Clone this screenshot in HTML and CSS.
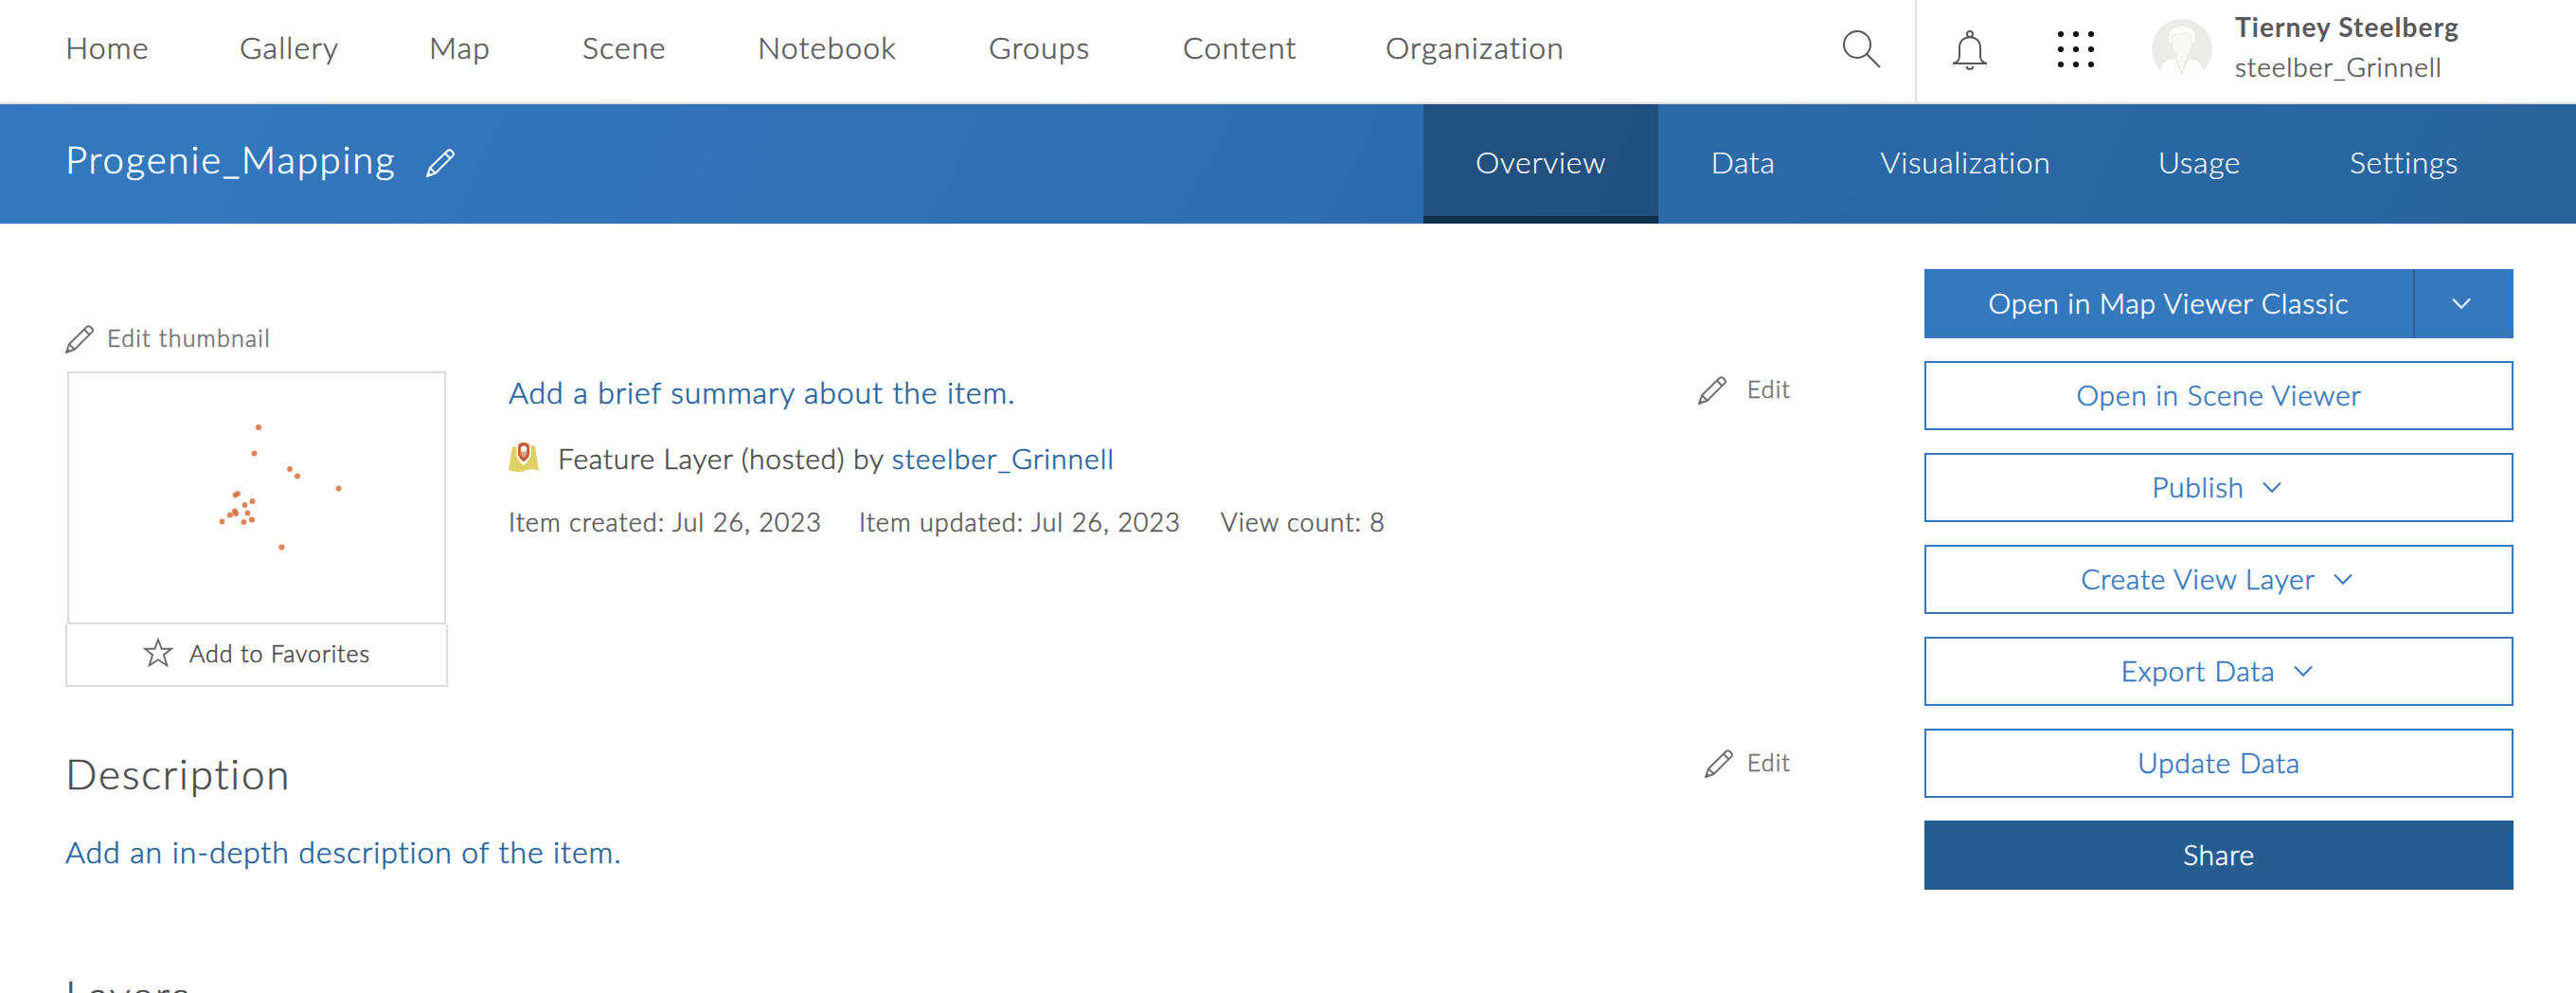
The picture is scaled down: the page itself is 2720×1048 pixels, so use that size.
FILE: index.html
```html
<!DOCTYPE html>
<html lang="en">
<head>
<meta charset="utf-8">
<title>Progenie_Mapping</title>
<link rel="stylesheet" href="styles.css">
</head>
<body>
<svg class="defs" width="0" height="0" aria-hidden="true">
  <symbol id="pencil" viewBox="0 0 30 30">
    <path d="M1 29 L4 20.200 L22.600 2 Q24.600 .4 26.400 2 L28.200 3.800 Q29.800 5.600 28.200 7.400 L9.800 25.800 Z M20 4.800 L25.400 10.200 M4 20.200 L9.800 25.800" fill="none" stroke="currentColor" stroke-width="2" stroke-linejoin="round"/>
    <path d="M0 30 L2 24.400 L5.600 28 Z" fill="currentColor"/>
  </symbol>
  <symbol id="chevron" viewBox="0 0 20 13">
    <path d="M1 1.5 L10 10.7 L19 1.5" fill="none" stroke="currentColor" stroke-width="2"/>
  </symbol>
</svg>

<header class="header">
  <nav class="nav">
    <a>Home</a><a>Gallery</a><a>Map</a><a>Scene</a><a>Notebook</a><a>Groups</a><a>Content</a><a>Organization</a>
  </nav>
  <div class="tools">
    <svg class="search" width="40" height="40" viewBox="0 0 40 40"><circle cx="15" cy="15" r="14" fill="none" stroke="#555" stroke-width="2"/><path d="M25 25 L39 39" stroke="#555" stroke-width="2"/></svg>
    <div class="account">
      <svg class="bell" width="36" height="42" viewBox="0 0 36 42" fill="none" stroke="#595959" stroke-width="2"><circle cx="18" cy="4" r="3"/><path d="M0 35 H36 M1 34.5 Q7 33.5 7 27 V18 C7 11 12 7.2 18 7.2 S29 11 29 18 V27 Q29 33.5 35 34.5 M14.5 38 Q15 41 18 41 T21.5 38"/></svg>
      <svg class="apps" width="40" height="40" viewBox="0 0 40 40" fill="#151515"><circle cx="4" cy="4" r="3.1"/><circle cx="20" cy="4" r="3.1"/><circle cx="36" cy="4" r="3.1"/><circle cx="4" cy="20" r="3.1"/><circle cx="20" cy="20" r="3.1"/><circle cx="36" cy="20" r="3.1"/><circle cx="4" cy="36" r="3.1"/><circle cx="20" cy="36" r="3.1"/><circle cx="36" cy="36" r="3.1"/></svg>
      <svg class="avatar" width="64" height="64" viewBox="0 0 64 64">
        <defs><clipPath id="round"><circle cx="32" cy="32" r="32"/></clipPath></defs>
        <g clip-path="url(#round)"><rect width="64" height="64" fill="#ebebea"/>
        <path d="M8 64 Q9 46 17 43.500 L27 42 V36 H37 V42 L46 43.500 Q54 46 56 64 Z" fill="#fdfdfd"/>
        <path d="M19 25 Q17 13 25 9 Q34 5 42 11 Q47 15 45 25 Z" fill="#fdfdfd"/>
        <path d="M22 17 Q31 16.500 38 14 Q42 17 42.500 24 C43 34 37 41 32 41 S20 34 22 17 Z" fill="#f8f8f7" stroke="#ececeb"/>
        <path d="M26 42 L31.500 58 L38 42" fill="#f8f8f7" stroke="#e0e0df"/></g>
      </svg>
      <div class="user"><strong>Tierney Steelberg</strong><span>steelber_Grinnell</span></div>
    </div>
  </div>
</header>

<div class="titlebar">
  <h1>Progenie_Mapping</h1>
  <svg class="pencil" width="30" height="30"><use href="#pencil"/></svg>
  <nav class="tabs"><a class="active">Overview</a><a>Data</a><a>Visualization</a><a>Usage</a><a>Settings</a></nav>
</div>

<main class="page">
  <div class="content">
    <section class="item">
      <div class="media">
        <div class="edit-thumb"><svg width="30" height="30"><use href="#pencil"/></svg><span>Edit thumbnail</span></div>
        <svg class="thumb" width="396" height="263" viewBox="2 2 396 263" fill="#d8743f">
          <g fill-opacity=".88"><circle cx="202" cy="59" r="3.100"/><circle cx="197.500" cy="86.500" r="2.900"/><circle cx="235" cy="103" r="2.900"/><circle cx="243" cy="110.500" r="3"/><circle cx="286.500" cy="123.500" r="3"/><circle cx="180" cy="129" r="3"/><circle cx="177.500" cy="130.500" r="2.900"/><circle cx="195.500" cy="137" r="3"/><circle cx="187.500" cy="141" r="2.900"/><circle cx="177" cy="147.500" r="3"/><circle cx="178" cy="150" r="3"/><circle cx="172" cy="151.500" r="3"/><circle cx="190.500" cy="149.500" r="2.900"/><circle cx="195" cy="156.500" r="3.100"/><circle cx="163.500" cy="158.500" r="2.900"/><circle cx="186.500" cy="159" r="2.900"/><circle cx="226.500" cy="185.500" r="3.100"/></g>
        </svg>
        <div class="favorite"><svg width="32" height="31" viewBox="0 0 32 31"><path d="M16 2.200 L19.700 11.700 H30 L21.900 18.200 L25.300 29.300 L16 23.300 L6.700 29.300 L10.100 18.200 L2 11.700 H12.300 Z" fill="none" stroke="#6a6a6a" stroke-width="1.900"/></svg><span>Add to Favorites</span></div>
      </div>
      <div class="info">
        <a class="summary">Add a brief summary about the item.</a>
        <div class="type">
          <svg width="32" height="32" viewBox="0 0 32 32"><path d="M4 4 Q9 6 16 4 T28 4 L32 30 Q26 27 20 29 Q10 33 0 29 Z" fill="#e0d065"/><path d="M8.500 0 H23.500 V14 Q22 19 16 24 Q10 19 8.500 14 Z" fill="#fff"/><path d="M16 0 Q22 0 22 5 V13 Q21 16.500 16 20.500 Q11 16.500 10 13 V5 Q10 0 16 0 Z" fill="#c3593a"/><path d="M16 3 Q19.500 3 19.500 6.500 V12.500 L16 16.500 L12.500 12.500 V6.500 Q12.500 3 16 3 Z" fill="#dc9a84"/><circle cx="16" cy="7" r="3" fill="#fff"/></svg>
          <span>Feature Layer (hosted) by <a>steelber_Grinnell</a></span>
        </div>
        <div class="meta"><span>Item created: Jul 26, 2023</span><span>Item updated: Jul 26, 2023</span><span>View count: 8</span></div>
      </div>
      <div class="edit edit-item"><svg width="30" height="30"><use href="#pencil"/></svg><span>Edit</span></div>
    </section>
    <section class="description">
      <div class="section-head"><h2>Description</h2><div class="edit"><svg width="30" height="30"><use href="#pencil"/></svg><span>Edit</span></div></div>
      <a class="summary">Add an in-depth description of the item.</a>
    </section>
    <section class="layers"><h2>Layers</h2></section>
  </div>

  <aside class="actions">
    <div class="split"><a>Open in Map Viewer Classic</a><a class="toggle"><svg width="20" height="13"><use href="#chevron"/></svg></a></div>
    <a class="button">Open in Scene Viewer</a>
    <a class="button drop"><span>Publish</span><svg width="20" height="13"><use href="#chevron"/></svg></a>
    <a class="button drop"><span>Create View Layer</span><svg width="20" height="13"><use href="#chevron"/></svg></a>
    <a class="button drop"><span>Export Data</span><svg width="20" height="13"><use href="#chevron"/></svg></a>
    <a class="button">Update Data</a>
    <a class="button share">Share</a>
  </aside>
</main>
</body>
</html>
```
FILE: styles.css
```css
* { box-sizing: border-box; }
body {
  margin: 0;
  height: 1048px;
  overflow: hidden;
  background: #fff;
  color: #4c4c4c;
  font-family: Lato, "Open Sans", sans-serif;
  font-weight: 300;
  -webkit-text-stroke: .6px;
}
svg { display: block; flex: none; }
.defs { position: absolute; }
h1, h2 { margin: 0; font-weight: 300; }

.header {
  display: flex;
  justify-content: space-between;
  height: 110px;
  border-bottom: 2px solid #dfdfdf;
}
.nav {
  display: grid;
  grid-template-columns: 184px 200px 162px 185px 244px 205px 214px auto;
  padding: 30px 0 0 69px;
  color: #595959;
  font-size: 32px;
  line-height: 40px;
  letter-spacing: 1.15px;
}
.tools { display: flex; }
.search { margin: 32px 36px 0 0; }
.account {
  display: flex;
  width: 698px;
  border-left: 2px solid #dfdfdf;
  padding-left: 38px;
}
.bell { margin-top: 32px; }
.apps { margin: 32px 0 0 74px; }
.avatar { margin: 20px 0 0 60px; }
.user {
  display: flex;
  flex-direction: column;
  margin: 8px 0 0 24px;
  color: #595959;
  font-size: 28px;
  line-height: 42px;
  letter-spacing: .9px;
}
.user strong {
  font-weight: 700;
  line-height: 41px;
  letter-spacing: 1.1px;
  -webkit-text-stroke: 0;
}

.titlebar {
  display: flex;
  height: 126px;
  padding-left: 69px;
  background: linear-gradient(115deg, #3479bf, #2d6bab 60%, #28639b);
  color: #fff;
}
.titlebar h1 {
  width: 381px;
  padding-top: 33px;
  font-size: 40px;
  line-height: 50px;
  letter-spacing: 1.9px;
}
.titlebar .pencil { margin-top: 47px; }
.tabs {
  display: grid;
  grid-template-columns: 248px 179px 291px 203px 229px;
  margin: 0 67px 0 auto;
  font-size: 32px;
  line-height: 121px;
  letter-spacing: .6px;
  text-align: center;
  -webkit-text-stroke: .2px;
}
.tabs .active {
  background: rgba(0, 0, 0, .26);
  box-shadow: inset 0 -8px #12304b;
}

.page {
  display: flex;
  justify-content: space-between;
  padding: 48px 66px 0 69px;
}
.content { width: 1822px; padding-top: 59px; }
.item { display: flex; }
.media { width: 468px; }
.edit-thumb {
  display: flex;
  gap: 14px;
  margin-bottom: 19px;
  color: #707070;
  font-size: 25px;
  line-height: 27px;
  letter-spacing: 1.25px;
}
.thumb {
  box-sizing: content-box;
  margin-left: 2px;
  border: 2px solid #dcdcdc;
}
.favorite {
  display: flex;
  gap: 17px;
  width: 404px;
  height: 66px;
  padding: 14px 0 0 80px;
  border: solid #dcdcdc;
  border-width: 0 2px 2px;
  font-size: 25px;
  line-height: 33px;
  letter-spacing: .9px;
}
.info { padding-top: 51px; }
.summary {
  display: block;
  color: #22629b;
  font-size: 32px;
  line-height: 40px;
  letter-spacing: .9px;
}
.type {
  display: flex;
  align-items: center;
  gap: 20px;
  margin: 29px 0 28px;
  font-size: 30px;
  line-height: 40px;
  letter-spacing: .7px;
}
.type a { color: #22629b; letter-spacing: 1px; }
.meta {
  display: grid;
  grid-template-columns: 370px 382px auto;
  color: #595959;
  font-size: 27px;
  line-height: 40px;
  letter-spacing: 1px;
}
.edit {
  display: flex;
  gap: 15px;
  color: #707070;
  font-size: 25px;
  line-height: 27px;
  letter-spacing: 1.1px;
}
.edit-item { gap: 22px; margin: 54px 0 0 auto; }
.description { padding-top: 65px; }
.section-head {
  display: flex;
  justify-content: space-between;
  height: 50px;
  margin-bottom: 39px;
}
.section-head .edit { margin-top: 1px; }
h2 {
  font-size: 44px;
  line-height: 53px;
  letter-spacing: 1.8px;
}
.layers { padding-top: 105px; }

.actions {
  display: flex;
  flex-direction: column;
  gap: 24px;
  width: 622px;
  font-size: 30px;
  letter-spacing: .7px;
}
.split {
  display: flex;
  height: 73px;
  background: #3578bd;
  color: #fff;
  line-height: 71px;
  text-align: center;
}
.split a:first-child { flex: 1; }
.toggle {
  display: flex;
  align-items: center;
  justify-content: center;
  width: 106px;
  border-left: 2px solid #275f98;
  padding-right: 7px;
}
.button {
  display: flex;
  align-items: center;
  justify-content: center;
  height: 73px;
  padding-bottom: 4px;
  border: 2px solid #3578bd;
  color: #3578bd;
}
.drop { gap: 19px; padding-right: 5px; }
.drop svg { margin-top: 3px; }
.share { border-color: #265d91; background: #265d91; color: #fff; }
```
